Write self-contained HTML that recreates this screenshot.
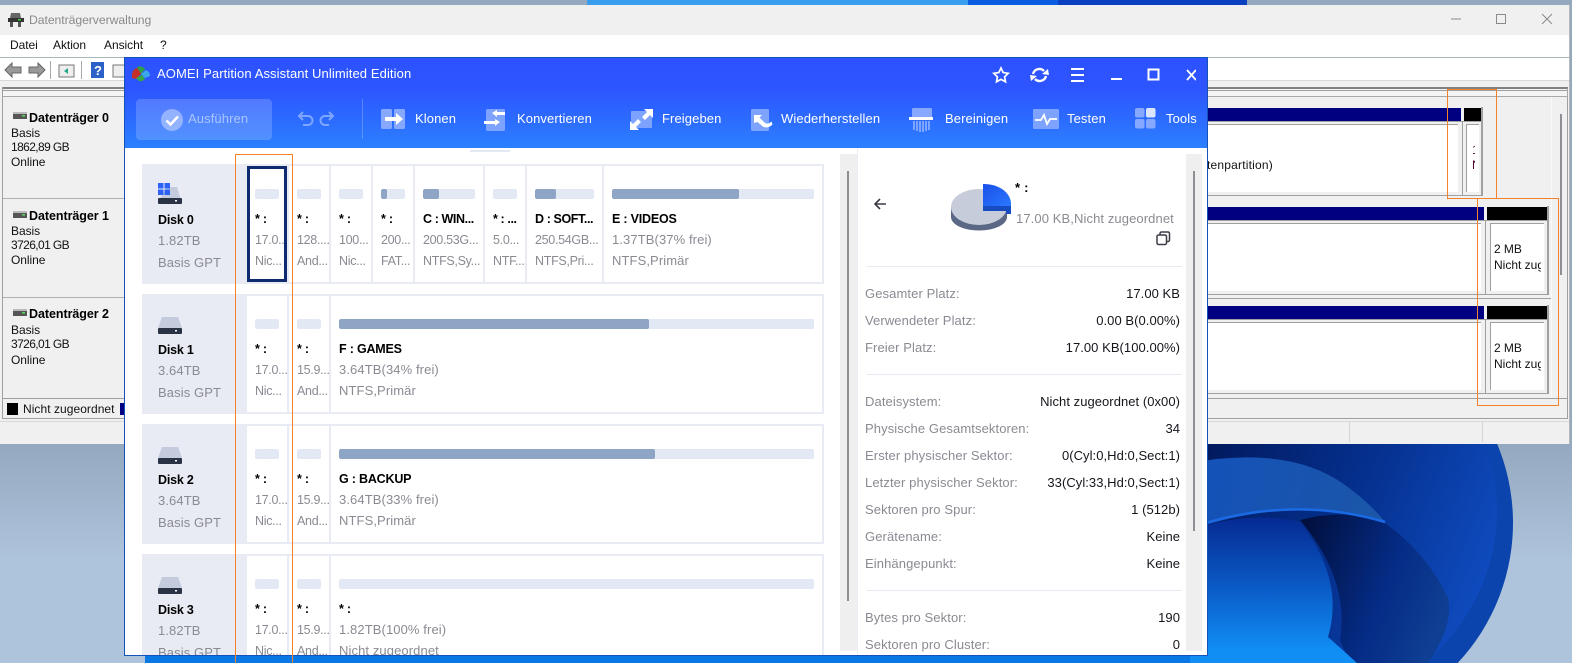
<!DOCTYPE html>
<html lang="de"><head><meta charset="utf-8"><title>Datenträgerverwaltung</title>
<style>
*{box-sizing:border-box}
html,body{margin:0;padding:0;width:1572px;height:663px;overflow:hidden;background:#aec4dc;font-family:"Liberation Sans",sans-serif}
#r{position:relative;width:1572px;height:663px;overflow:hidden}
.a{position:absolute}
.t{position:absolute;white-space:nowrap;line-height:14px;font-size:12px}
.w{color:#111;font-size:12px;letter-spacing:-.05px}
.d{letter-spacing:-.6px}
.row{position:absolute;left:17px;width:682px;height:120px;background:#e8ebf3}
.cell{position:absolute;top:2px;height:116px;background:#fff;overflow:hidden}
.bar{position:absolute;left:8px;right:8px;top:23px;height:10px;background:#e3e8f5;border-radius:2px;overflow:hidden}
.bar i{position:absolute;left:0;top:0;bottom:0;background:#8fa5c5;border-radius:2px}
.cell .t,.lab .t{font-size:13px;letter-spacing:.1px;color:#8a8a93;margin-top:1px}
.cell b,.lab b{color:#000;letter-spacing:-.2px;font-size:12.5px}
.cell .t{left:8px}
.cell .e{font-size:12.5px;letter-spacing:-.3px}
.cell .e b{font-size:12.5px;letter-spacing:-.4px}
.k{left:740px;color:#8a8a93;font-size:13px;letter-spacing:.1px;margin-top:1px}
.v{right:27px;color:#15151c;font-size:13px;letter-spacing:.05px;margin-top:1px}
.hl{position:absolute;left:742px;width:315px;height:1px;background:#e8e9f2}
.tb{color:#fff;font-size:13px;letter-spacing:.1px;top:54px}
.o{position:absolute;border:1px solid #f5812b;z-index:9}
.gl{position:absolute;background:#a0a0a0}
</style></head><body><div id="r">
<!-- wallpaper -->
<svg class="a" style="left:0;top:0" width="1572" height="663" viewBox="0 0 1572 663">
<defs>
<linearGradient id="bg" x1="0" y1="444" x2="0" y2="560" gradientUnits="userSpaceOnUse"><stop offset="0" stop-color="#94a9bf"/><stop offset="1" stop-color="#aec4dc"/></linearGradient>
<linearGradient id="d1" x1="1207" y1="444" x2="1500" y2="560" gradientUnits="userSpaceOnUse"><stop offset="0" stop-color="#021a5e"/><stop offset=".5" stop-color="#05308e"/><stop offset="1" stop-color="#0f4cc0"/></linearGradient>
<linearGradient id="p1" x1="1207" y1="470" x2="1380" y2="510" gradientUnits="userSpaceOnUse"><stop offset="0" stop-color="#1452b8"/><stop offset="1" stop-color="#1b56a8"/></linearGradient>
<linearGradient id="p2" x1="0" y1="520" x2="0" y2="650" gradientUnits="userSpaceOnUse"><stop offset="0" stop-color="#062c94"/><stop offset=".5" stop-color="#0a58c4"/><stop offset="1" stop-color="#108ef4"/></linearGradient>
<linearGradient id="p3" x1="1300" y1="540" x2="1450" y2="600" gradientUnits="userSpaceOnUse"><stop offset="0" stop-color="#01103f"/><stop offset=".6" stop-color="#052c86"/><stop offset="1" stop-color="#0f3f92"/></linearGradient>
</defs>
<rect width="1572" height="663" fill="url(#bg)"/>
<rect x="587" y="0" width="381" height="6" fill="#3a9eee"/><rect x="968" y="0" width="90" height="6" fill="#0a5ce0"/><rect x="1058" y="0" width="189" height="6" fill="#0a3fc0"/>
<path d="M1158.300 663A205 205 0 1 1 1457.700 663Z" fill="#0a44ac"/>
<path d="M1176 663A197 197 0 1 1 1424 663Z" fill="url(#d1)"/>
<rect x="145" y="650" width="1070" height="13" fill="#0a78e4"/>
<path d="M1190 463Q1290 445 1345 485Q1370 503 1385 522Q1290 495 1190 530Z" fill="url(#p1)"/>
<path d="M1300 520Q1345 508 1383 522Q1425 550 1448 598Q1454 625 1428 663H1350L1340 640Q1350 580 1300 520Z" fill="url(#p3)"/>
<path d="M1190 530Q1250 510 1300 522Q1345 580 1328 637Q1345 652 1357 663H1190Z" fill="url(#p2)"/>
<path d="M1190 528Q1290 494 1385 522" fill="none" stroke="#1b6ae4" stroke-width="2.5"/>
</svg>

<!-- Disk management window -->
<div class="a" style="left:0;top:5px;width:1570px;height:439px;background:#f0f0f0"></div>
<div class="a" style="left:0;top:35px;width:1570px;height:22px;background:#fff"></div>
<div class="a" style="left:0;top:57px;width:1570px;height:1px;background:#aab8b8"></div>
<div class="a" style="left:0;top:58px;width:1570px;height:22px;background:#fff"></div>
<div class="a" style="left:0;top:80px;width:1570px;height:1px;background:#d8d8d8"></div>
<svg class="a" style="left:8px;top:12px" width="16" height="16" viewBox="0 0 16 16"><path d="M3 1h9l1 5H2z" fill="#666"/><rect x="0" y="6" width="16" height="4" fill="#333"/><rect x="10" y="7" width="3" height="1.5" fill="#4c4"/><path d="M2 10h3v5H2zM10 10h3v5h-3z" fill="#555"/></svg>
<div class="t w" style="left:29px;top:13px;color:#8a8a8a;font-size:12.2px">Datenträgerverwaltung</div>
<div class="t w" style="left:10px;top:38px">Datei</div><div class="t w" style="left:53px;top:38px">Aktion</div><div class="t w" style="left:104px;top:38px">Ansicht</div><div class="t w" style="left:160px;top:38px">?</div>
<svg class="a" style="left:1449px;top:12px" width="104" height="14" fill="none" stroke="#8a8a8a"><path d="M2 7h10"/><rect x="47.500" y="2.500" width="9" height="9"/><path d="M93 2l10 10M103 2L93 12"/></svg>
<svg class="a" style="left:4px;top:60px" width="124" height="20" viewBox="0 0 124 20"><path d="M1 10l7-7v4h9v6H8v4z" fill="#999" stroke="#666"/><path d="M41 10l-7-7v4h-9v6h9v4z" fill="#999" stroke="#666"/><rect x="46" y="1" width="1" height="18" fill="#aaa"/><rect x="55" y="5" width="15" height="12" fill="#eee" stroke="#777"/><path d="M64 8l-4 3 4 3z" fill="#2a8"/><rect x="77" y="1" width="1" height="18" fill="#aaa"/><rect x="87" y="2" width="13" height="16" fill="#2c62c8"/><text x="90" y="15" font-size="13" font-weight="bold" fill="#fff" font-family="Liberation Sans">?</text><rect x="109" y="5" width="13" height="12" fill="#eee" stroke="#777"/></svg>

<!-- list splitter -->
<div class="a" style="left:2px;top:87px;width:1566px;height:10px;border:1px solid #a8a8a8;border-top:2px solid #808080;border-left:none;background:#f4f4f4"></div>
<div class="a" style="left:2px;top:90px;width:1566px;height:1px;background:#a0a0a0"></div>
<!-- left column -->
<div class="a" style="left:2px;top:87px;width:1px;height:332px;background:#a0a0a0"></div>
<div class="a" style="left:3px;top:198px;width:122px;height:1px;background:#b0b0b0"></div>
<div class="a" style="left:3px;top:297px;width:122px;height:1px;background:#b0b0b0"></div>
<svg class="a" style="left:13px;top:112px" width="14" height="7"><rect width="14" height="7" fill="#555"/><rect x="0" y="0" width="14" height="2" fill="#bbb"/><rect x="9" y="3" width="3" height="1.500" fill="#5d5"/></svg>
<div class="t w" style="left:29px;top:111px;font-weight:bold;color:#000;font-size:12.500px">Datenträger 0</div>
<div class="t w" style="left:11px;top:126px">Basis</div><div class="t w d" style="left:11px;top:140px">1862,89 GB</div><div class="t w" style="left:11px;top:155px">Online</div>
<svg class="a" style="left:13px;top:211px" width="14" height="7"><rect width="14" height="7" fill="#555"/><rect width="14" height="2" fill="#bbb"/><rect x="9" y="3" width="3" height="1.500" fill="#5d5"/></svg>
<div class="t w" style="left:29px;top:209px;font-weight:bold;color:#000;font-size:12.500px">Datenträger 1</div>
<div class="t w" style="left:11px;top:224px">Basis</div><div class="t w d" style="left:11px;top:238px">3726,01 GB</div><div class="t w" style="left:11px;top:253px">Online</div>
<svg class="a" style="left:13px;top:309px" width="14" height="7"><rect width="14" height="7" fill="#555"/><rect width="14" height="2" fill="#bbb"/><rect x="9" y="3" width="3" height="1.500" fill="#5d5"/></svg>
<div class="t w" style="left:29px;top:307px;font-weight:bold;color:#000;font-size:12.500px">Datenträger 2</div>
<div class="t w" style="left:11px;top:323px">Basis</div><div class="t w d" style="left:11px;top:337px">3726,01 GB</div><div class="t w" style="left:11px;top:353px">Online</div>
<!-- legend / status -->
<div class="a" style="left:2px;top:398px;width:1566px;height:1px;background:#a0a0a0"></div>
<div class="a" style="left:2px;top:418px;width:1566px;height:1px;background:#a0a0a0"></div>
<div class="a" style="left:1567px;top:97px;width:1px;height:322px;background:#a0a0a0"></div>
<div class="a" style="left:0;top:421px;width:1570px;height:1px;background:#d8d8d8"></div>
<div class="a" style="left:7px;top:403px;width:11px;height:12px;background:#000"></div>
<div class="t w" style="left:23px;top:402px;letter-spacing:.05px">Nicht zugeordnet</div>
<div class="a" style="left:120px;top:403px;width:6px;height:12px;background:#000080"></div>
<div class="a" style="left:1349px;top:422px;width:1px;height:20px;background:#d4d4d4"></div>
<div class="a" style="left:1482px;top:422px;width:1px;height:20px;background:#d4d4d4"></div>
<div class="a" style="left:1569px;top:5px;width:1px;height:439px;background:#b8b8b8"></div>
<!-- graph rows -->
<div class="a" style="left:1200px;top:108px;width:261px;height:13px;background:#000080"></div>
<div class="a" style="left:1464px;top:108px;width:17px;height:13px;background:#000"></div>
<div class="gl" style="left:1481px;top:107px;width:2px;height:88px"></div>
<div class="gl" style="left:1200px;top:121px;width:283px;height:1px"></div>
<div class="a" style="left:1200px;top:124px;width:258px;height:68px;background:#fff;border-top:1px solid #a0a0a0"></div>
<div class="gl" style="left:1462px;top:122px;width:1px;height:73px"></div>
<div class="a" style="left:1466px;top:124px;width:13px;height:68px;background:#fff;border-top:1px solid #a0a0a0;border-left:1px solid #a0a0a0"><div class="a" style="left:0;top:0;width:8px;height:60px;overflow:hidden"><div class="t w" style="left:5px;top:18px;color:#4a0030">1</div><div class="t w" style="left:5px;top:33px;color:#4a0030">N</div></div></div>
<div class="t w" style="left:1207px;top:158px;letter-spacing:.2px">tenpartition)</div>
<div class="gl" style="left:1200px;top:195px;width:283px;height:1px"></div>

<div class="a" style="left:1200px;top:207px;width:284px;height:13px;background:#000080"></div>
<div class="a" style="left:1487px;top:207px;width:60px;height:13px;background:#000"></div>
<div class="gl" style="left:1547px;top:206px;width:2px;height:88px"></div>
<div class="gl" style="left:1200px;top:220px;width:349px;height:1px"></div>
<div class="a" style="left:1200px;top:223px;width:281px;height:68px;background:#fff;border-top:1px solid #a0a0a0"></div>
<div class="gl" style="left:1485px;top:221px;width:1px;height:73px"></div>
<div class="a" style="left:1490px;top:223px;width:54px;height:68px;background:#fff;border-top:1px solid #a0a0a0;border-left:1px solid #a0a0a0;overflow:hidden"><div class="t w" style="left:3px;top:18px">2 MB</div><div class="t" style="left:3px;top:34px;width:47px;overflow:hidden;color:#111">Nicht zugeordnet</div></div>
<div class="gl" style="left:1200px;top:294px;width:349px;height:1px"></div>
<div class="gl" style="left:1200px;top:298px;width:351px;height:1px"></div>

<div class="a" style="left:1200px;top:306px;width:284px;height:13px;background:#000080"></div>
<div class="a" style="left:1487px;top:306px;width:60px;height:13px;background:#000"></div>
<div class="gl" style="left:1547px;top:305px;width:2px;height:88px"></div>
<div class="gl" style="left:1200px;top:319px;width:349px;height:1px"></div>
<div class="a" style="left:1200px;top:322px;width:281px;height:68px;background:#fff;border-top:1px solid #a0a0a0"></div>
<div class="gl" style="left:1485px;top:320px;width:1px;height:73px"></div>
<div class="a" style="left:1490px;top:322px;width:54px;height:68px;background:#fff;border-top:1px solid #a0a0a0;border-left:1px solid #a0a0a0;overflow:hidden"><div class="t w" style="left:3px;top:18px">2 MB</div><div class="t" style="left:3px;top:34px;width:47px;overflow:hidden;color:#111">Nicht zugeordnet</div></div>
<div class="gl" style="left:1200px;top:393px;width:349px;height:1px"></div>
<div class="a" style="left:1551px;top:97px;width:1px;height:301px;background:#fafafa"></div>
<div class="a" style="left:1560px;top:114px;width:2px;height:161px;background:#8e8e94"></div>

<!-- AOMEI window -->
<div class="a" style="left:124px;top:57px;width:1084px;height:599px;background:#fff;border:1px solid #1552b8;overflow:hidden;z-index:5">
  <div class="a" style="left:0;top:0;width:1082px;height:90px;background:linear-gradient(#2d52ff 0,#2d55ff 35%,#2b80ff 100%)"></div>
  <svg class="a" style="left:6px;top:8px" width="20" height="17" viewBox="0 0 20 17"><path d="M1 8Q2 2 8 2l2 6-5 5-4-1z" fill="#c42f2a"/><path d="M6 1Q11-1 14 3l-4 5z" fill="#2fa04a"/><path d="M10 8l5-4q4 2 4 6l-5 2z" fill="#3aa8e8"/><path d="M5 12l6-3 3 4q-3 3-6 2z" fill="#37a84a"/></svg>
  <div class="t tb" style="left:32px;top:9px">AOMEI Partition Assistant Unlimited Edition</div>
  <svg class="a" style="left:866px;top:7px" width="205" height="20" viewBox="0 0 205 20" fill="none" stroke="#fff" stroke-width="2"><path d="M10 3l2.200 4.600 5 .7-3.600 3.500.9 5-4.500-2.400-4.500 2.400.9-5L2.800 8.300l5-.7z" stroke-width="1.700"/><path d="M42 9a6.500 6.500 0 0 1 11-3M55 11a6.500 6.500 0 0 1-11 3" stroke-width="2.400"/><path d="M51 9l6-5 1 6zM46 11l-6 5-1-6z" fill="#fff" stroke="none"/><path d="M80 4h13M80 10h13M80 16h13"/><path d="M120 14h11"/><rect x="157.500" y="4.500" width="10" height="10"/><path d="M196 5l9 10M205 5l-9 10" stroke-width="1.800"/></svg>

  <div class="a" style="left:11px;top:41px;width:136px;height:41px;background:rgba(255,255,255,.18);border-radius:4px"></div>
  <svg class="a" style="left:35px;top:50px" width="24" height="24"><circle cx="12" cy="12" r="11" fill="#a9c2ff" fill-opacity=".75"/><path d="M6.500 12.500l4 4 7.500-8" fill="none" stroke="#fff" stroke-width="2.500"/></svg>
  <div class="t" style="left:63px;top:54px;color:#a9c4ff;font-size:13px;letter-spacing:.1px">Ausführen</div>
  <svg class="a" style="left:171px;top:52px" width="44" height="20" fill="none" stroke="#7fa6ff" stroke-width="2"><path d="M4 6h8a4 4 0 0 1 0 9H7M7 2L3 6l4 4M36 6h-7a4 4 0 0 0 0 9h4M33 2l4 4-4 4"/></svg>
  <div class="a" style="left:237px;top:41px;width:1px;height:40px;background:rgba(255,255,255,.22)"></div>

  <svg class="a" style="left:256px;top:50px" width="26" height="22"><rect x="0" y="1" width="11" height="20" rx="1.500" fill="#86a9ff"/><rect x="13" y="1" width="11" height="20" rx="1.500" fill="#86a9ff"/><path d="M4 9h11V5l7 6-7 6v-4H4z" fill="#fff"/></svg>
  <div class="t tb" style="left:290px">Klonen</div>
  <svg class="a" style="left:358px;top:50px" width="24" height="24"><rect x="3" y="1" width="19" height="22" rx="1.500" fill="#7ea3ff"/><path d="M9 5l5-3v2h8v3h-8v2zM17 14l-5-3v2H1v3h11v2z" fill="#fff"/></svg>
  <div class="t tb" style="left:392px">Konvertieren</div>
  <svg class="a" style="left:505px;top:51px" width="24" height="22"><rect x="1" y="2" width="21" height="17" rx="1" fill="#7ea3ff"/><path d="M23 0v9l-3-3-5 5-3-3 5-5-3-3zM0 21v-9l3 3 5-5 3 3-5 5 3 3z" fill="#fff"/></svg>
  <div class="t tb" style="left:537px">Freigeben</div>
  <svg class="a" style="left:626px;top:50px" width="22" height="23"><rect x="0" y="1" width="18" height="22" rx="1.500" fill="#7ea3ff"/><path d="M3 7h8l-2.500 2.500 5 5q2.500 2 5 .5l2-1.500 1 3q-4 4-9 2.500l-6-5L3 15z" fill="#fff"/></svg>
  <div class="t tb" style="left:656px">Wiederherstellen</div>
  <svg class="a" style="left:784px;top:49px" width="26" height="25"><rect x="3" y="1" width="20" height="11" rx="1.500" fill="#86a9ff"/><rect x="0" y="10" width="24" height="3" fill="#fff"/><path d="M5 14v9M8 14v10M11 14v11M14 14v11M17 14v10M20 14v9" stroke="#9ab8ff" stroke-width="1.500"/></svg>
  <div class="t tb" style="left:820px">Bereinigen</div>
  <svg class="a" style="left:908px;top:51px" width="27" height="21"><rect x="0" y="0" width="26" height="20" rx="1" fill="#7ea3ff"/><path d="M2 11h6l3-5 3 9 3-5h7" fill="none" stroke="#fff" stroke-width="1.800"/></svg>
  <div class="t tb" style="left:942px">Testen</div>
  <svg class="a" style="left:1010px;top:50px" width="21" height="21"><rect x="0" y="0" width="9.500" height="9.500" rx="2" fill="#86a9ff"/><rect x="11" y="0" width="9.500" height="9.500" rx="2" fill="#dce6ff"/><rect x="0" y="11" width="9.500" height="9.500" rx="2" fill="#86a9ff"/><rect x="11" y="11" width="9.500" height="9.500" rx="2" fill="#86a9ff"/></svg>
  <div class="t tb" style="left:1041px">Tools</div>

  <div class="a" style="left:345px;top:92px;width:40px;height:2px;background:#e3e8f5"></div>

  <div class="row" style="top:106px">
    <div class="a lab" style="left:0;top:0;width:105px;height:120px">
      <svg class="a" style="left:16px;top:19px" width="24" height="21"><path d="M9 4h10l4 13H1z" fill="#c3cbdd"/><rect x="0" y="15" width="24" height="6" rx="1" fill="#2a3346"/><rect x="17" y="17" width="2" height="1.500" fill="#fff"/><path d="M0 0h5.500v5.500H0zM6.500 0H12v5.500H6.500zM0 6.500h5.500V12H0zM6.500 6.500H12V12H6.500z" fill="#2b62f5"/></svg>
      <div class="t" style="left:16px;top:48px"><b>Disk 0</b></div><div class="t" style="left:16px;top:69px">1.82TB</div><div class="t" style="left:16px;top:91px">Basis GPT</div>
    </div>
    <div class="cell" style="left:105px;width:40px"><div class="bar"></div><div class="t" style="top:45px"><b>* :</b></div><div class="t e" style="top:66px">17.0...</div><div class="t e" style="top:87px">Nic...</div></div>
    <div class="a" style="left:105px;top:2px;width:40px;height:116px;border:3px solid #0f2a6e"></div>
    <div class="cell" style="left:147px;width:40px"><div class="bar"></div><div class="t" style="top:45px"><b>* :</b></div><div class="t e" style="top:66px">128....</div><div class="t e" style="top:87px">And...</div></div>
    <div class="cell" style="left:189px;width:40px"><div class="bar"></div><div class="t" style="top:45px"><b>* :</b></div><div class="t e" style="top:66px">100...</div><div class="t e" style="top:87px">Nic...</div></div>
    <div class="cell" style="left:231px;width:40px"><div class="bar"><i style="width:6px"></i></div><div class="t" style="top:45px"><b>* :</b></div><div class="t e" style="top:66px">200...</div><div class="t e" style="top:87px">FAT...</div></div>
    <div class="cell" style="left:273px;width:68px"><div class="bar"><i style="width:16px"></i></div><div class="t e" style="top:45px"><b>C : WIN...</b></div><div class="t e" style="top:66px">200.53G...</div><div class="t e" style="top:87px">NTFS,Sy...</div></div>
    <div class="cell" style="left:343px;width:40px"><div class="bar"></div><div class="t e" style="top:45px"><b>* : ...</b></div><div class="t e" style="top:66px">5.0...</div><div class="t e" style="top:87px">NTF...</div></div>
    <div class="cell" style="left:385px;width:75px"><div class="bar"><i style="width:21px"></i></div><div class="t e" style="top:45px"><b>D : SOFT...</b></div><div class="t e" style="top:66px">250.54GB...</div><div class="t e" style="top:87px">NTFS,Pri...</div></div>
    <div class="cell" style="left:462px;width:218px"><div class="bar"><i style="width:127px"></i></div><div class="t" style="top:45px"><b>E : VIDEOS</b></div><div class="t" style="top:66px">1.37TB(37% frei)</div><div class="t" style="top:87px">NTFS,Primär</div></div>
  </div>

  <div class="row" style="top:236px">
    <div class="a lab" style="left:0;top:0;width:105px;height:120px">
      <svg class="a" style="left:16px;top:23px" width="24" height="17"><path d="M4 0h16l4 11H0z" fill="#c3cbdd"/><rect x="0" y="11" width="24" height="6" rx="1" fill="#2a3346"/><rect x="17" y="13" width="2" height="1.500" fill="#fff"/></svg>
      <div class="t" style="left:16px;top:48px"><b>Disk 1</b></div><div class="t" style="left:16px;top:69px">3.64TB</div><div class="t" style="left:16px;top:91px">Basis GPT</div>
    </div>
    <div class="cell" style="left:105px;width:40px"><div class="bar"></div><div class="t" style="top:45px"><b>* :</b></div><div class="t e" style="top:66px">17.0...</div><div class="t e" style="top:87px">Nic...</div></div>
    <div class="cell" style="left:147px;width:40px"><div class="bar"></div><div class="t" style="top:45px"><b>* :</b></div><div class="t e" style="top:66px">15.9...</div><div class="t e" style="top:87px">And...</div></div>
    <div class="cell" style="left:189px;width:491px"><div class="bar"><i style="width:310px"></i></div><div class="t" style="top:45px"><b>F : GAMES</b></div><div class="t" style="top:66px">3.64TB(34% frei)</div><div class="t" style="top:87px">NTFS,Primär</div></div>
  </div>

  <div class="row" style="top:366px">
    <div class="a lab" style="left:0;top:0;width:105px;height:120px">
      <svg class="a" style="left:16px;top:23px" width="24" height="17"><path d="M4 0h16l4 11H0z" fill="#c3cbdd"/><rect x="0" y="11" width="24" height="6" rx="1" fill="#2a3346"/><rect x="17" y="13" width="2" height="1.500" fill="#fff"/></svg>
      <div class="t" style="left:16px;top:48px"><b>Disk 2</b></div><div class="t" style="left:16px;top:69px">3.64TB</div><div class="t" style="left:16px;top:91px">Basis GPT</div>
    </div>
    <div class="cell" style="left:105px;width:40px"><div class="bar"></div><div class="t" style="top:45px"><b>* :</b></div><div class="t e" style="top:66px">17.0...</div><div class="t e" style="top:87px">Nic...</div></div>
    <div class="cell" style="left:147px;width:40px"><div class="bar"></div><div class="t" style="top:45px"><b>* :</b></div><div class="t e" style="top:66px">15.9...</div><div class="t e" style="top:87px">And...</div></div>
    <div class="cell" style="left:189px;width:491px"><div class="bar"><i style="width:316px"></i></div><div class="t" style="top:45px"><b>G : BACKUP</b></div><div class="t" style="top:66px">3.64TB(33% frei)</div><div class="t" style="top:87px">NTFS,Primär</div></div>
  </div>

  <div class="row" style="top:496px;height:101px;overflow:hidden">
    <div class="a lab" style="left:0;top:0;width:105px;height:101px;overflow:hidden">
      <svg class="a" style="left:16px;top:23px" width="24" height="17"><path d="M4 0h16l4 11H0z" fill="#c3cbdd"/><rect x="0" y="11" width="24" height="6" rx="1" fill="#2a3346"/><rect x="17" y="13" width="2" height="1.500" fill="#fff"/></svg>
      <div class="t" style="left:16px;top:48px"><b>Disk 3</b></div><div class="t" style="left:16px;top:69px">1.82TB</div><div class="t" style="left:16px;top:91px">Basis GPT</div>
    </div>
    <div class="cell" style="left:105px;width:40px;height:99px"><div class="bar"></div><div class="t" style="top:45px"><b>* :</b></div><div class="t e" style="top:66px">17.0...</div><div class="t e" style="top:87px">Nic...</div></div>
    <div class="cell" style="left:147px;width:40px;height:99px"><div class="bar"></div><div class="t" style="top:45px"><b>* :</b></div><div class="t e" style="top:66px">15.9...</div><div class="t e" style="top:87px">And...</div></div>
    <div class="cell" style="left:189px;width:491px;height:99px"><div class="bar"></div><div class="t" style="top:45px"><b>* :</b></div><div class="t" style="top:66px">1.82TB(100% frei)</div><div class="t" style="top:87px">Nicht zugeordnet</div></div>
  </div>

  <!-- scrollbars -->
  <div class="a" style="left:715px;top:96px;width:17px;height:497px;background:#efefef"></div>
  <div class="a" style="left:722px;top:113px;width:2px;height:430px;background:#8e8e94"></div>
  <div class="a" style="left:732px;top:90px;width:1px;height:507px;background:#eceef6"></div>
  <div class="a" style="left:1061px;top:96px;width:16px;height:497px;background:#efefef"></div>
  <div class="a" style="left:1068px;top:113px;width:2px;height:360px;background:#8e8e94"></div>

  <!-- detail header -->
  <svg class="a" style="left:748px;top:139px" width="16" height="14" fill="none" stroke="#3c3c46" stroke-width="1.600"><path d="M13 7H2M7 2L2 7l5 5"/></svg>
  <svg class="a" style="left:825px;top:125px" width="63" height="48" viewBox="0 0 63 48"><defs><linearGradient id="pb" x1="0" y1="0" x2="1" y2="1"><stop offset="0" stop-color="#1a4fe8"/><stop offset="1" stop-color="#2a78ff"/></linearGradient></defs><path d="M1 24v10c0 7.500 12.500 13.500 28 13.500s28-6 28-13.500V24z" fill="#5a6785"/><ellipse cx="29" cy="24" rx="28" ry="18" fill="#c6ccd9"/><path d="M33 1h1c13 0 26 7 27 19v3H33z" fill="url(#pb)"/><path d="M33 23h28v8H56v-3H33z" fill="#174cc0"/></svg>
  <div class="t" style="left:890px;top:123px;color:#000;font-weight:bold;font-size:13px;letter-spacing:.2px">* :</div>
  <div class="t" style="left:891px;top:154px;color:#8a8a93;font-size:13px;letter-spacing:.1px">17.00 KB,Nicht zugeordnet</div>
  <svg class="a" style="left:1031px;top:173px" width="15" height="15" fill="none" stroke="#3c3c46" stroke-width="1.500"><rect x="1" y="4" width="9.500" height="9.500" rx="1.500"/><path d="M4 3.500V2.500a1.500 1.500 0 0 1 1.500-1.500h6.500A1.500 1.500 0 0 1 13.500 2.500V9a1.500 1.500 0 0 1-1.500 1.500h-1"/></svg>

  <div class="hl" style="top:208px"></div>
  <div class="t k" style="top:228px">Gesamter Platz:</div><div class="t v" style="top:228px">17.00 KB</div>
  <div class="t k" style="top:255px">Verwendeter Platz:</div><div class="t v" style="top:255px">0.00 B(0.00%)</div>
  <div class="t k" style="top:282px">Freier Platz:</div><div class="t v" style="top:282px">17.00 KB(100.00%)</div>
  <div class="hl" style="top:316px"></div>
  <div class="t k" style="top:336px">Dateisystem:</div><div class="t v" style="top:336px">Nicht zugeordnet (0x00)</div>
  <div class="t k" style="top:363px">Physische Gesamtsektoren:</div><div class="t v" style="top:363px">34</div>
  <div class="t k" style="top:390px">Erster physischer Sektor:</div><div class="t v" style="top:390px">0(Cyl:0,Hd:0,Sect:1)</div>
  <div class="t k" style="top:417px">Letzter physischer Sektor:</div><div class="t v" style="top:417px">33(Cyl:33,Hd:0,Sect:1)</div>
  <div class="t k" style="top:444px">Sektoren pro Spur:</div><div class="t v" style="top:444px">1 (512b)</div>
  <div class="t k" style="top:471px">Gerätename:</div><div class="t v" style="top:471px">Keine</div>
  <div class="t k" style="top:498px">Einhängepunkt:</div><div class="t v" style="top:498px">Keine</div>
  <div class="hl" style="top:532px"></div>
  <div class="t k" style="top:552px">Bytes pro Sektor:</div><div class="t v" style="top:552px">190</div>
  <div class="t k" style="top:579px">Sektoren pro Cluster:</div><div class="t v" style="top:579px">0</div>
</div>

<!-- orange annotation boxes -->
<div class="o" style="left:235px;top:154px;width:58px;height:509px;border-bottom:none"></div>
<div class="o" style="left:1447px;top:89px;width:50px;height:110px"></div>
<div class="o" style="left:1477px;top:198px;width:82px;height:208px"></div>
</div></body></html>
